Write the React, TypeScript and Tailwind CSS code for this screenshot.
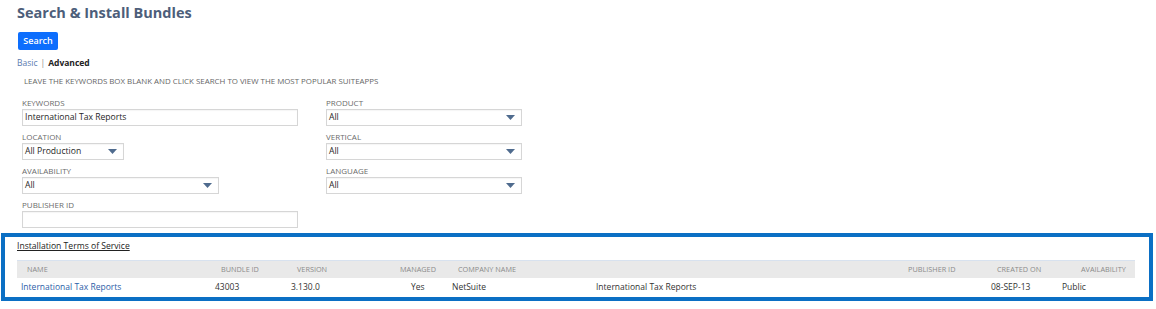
import React from 'react';

const Arrow: React.FC = () => (
    <svg width="9" height="5" viewBox="0 0 9 5" className="shrink-0">
        <path d="M0 0 H9 L4.5 5 Z" fill="#4f6b8e" />
    </svg>
);

const Field: React.FC<{ label: string; value?: string; width: string; select?: boolean }> = ({ label, value, width, select }) => (
    <div className="mb-[5px]">
        <div className="h-[12px] text-[8px] leading-[12px] text-[#6b6b6b] uppercase">{label}</div>
        <div className={`${width} h-[17px] border border-[#d6d6d6] bg-white flex items-center justify-between pl-[2px] pr-[6px] shadow-[inset_0_1px_1px_rgba(0,0,0,0.04)]`}>
            <span className="text-[8.6px] text-[#262626]">{value}</span>
            {select && <Arrow />}
        </div>
    </div>
);

const headers = [
    { label: 'Name', w: 'w-[194px]' },
    { label: 'Bundle ID', w: 'w-[76px]' },
    { label: 'Version', w: 'w-[103px]' },
    { label: 'Managed', w: 'w-[58px]' },
    { label: 'Company Name', w: 'w-[450px]' },
    { label: 'Publisher ID', w: 'w-[89px]' },
    { label: 'Created On', w: 'w-[84px]' },
    { label: 'Availability', w: 'flex-1' },
];

export default function App() {
    return (
        <div className="w-[1156px] h-[309px] bg-white font-['Open_Sans',sans-serif] text-[#333] overflow-hidden">
            <div className="pl-[17px]">
                <h1 className="h-[26px] text-[14.5px] leading-[26px] font-bold text-[#4d5e7a]">Search &amp; Install Bundles</h1>
                <button className="mt-[5px] ml-[1px] w-[40px] h-[18px] rounded-[2px] bg-[#0d6efd] text-white text-[9px] font-semibold">Search</button>
                <div className="mt-[7px] h-[12px] text-[8.5px] leading-[12px]">
                    <span className="text-[#5a7bb0]">Basic</span>
                    <span className="text-[#888] mx-[3px]">|</span>
                    <span className="font-bold text-[#222]">Advanced</span>
                </div>
                <div className="mt-[6px] pl-[7px] h-[12px] text-[7.9px] leading-[12px] text-[#666]">
                    LEAVE THE KEYWORDS BOX BLANK AND CLICK SEARCH TO VIEW THE MOST POPULAR SUITEAPPS
                </div>
            </div>

            <div className="mt-[10px] pl-[22px] flex">
                <div className="w-[304px]">
                    <Field label="Keywords" value="International Tax Reports" width="w-[276px]" />
                    <Field label="Location" value="All Production" width="w-[102px]" select />
                    <Field label="Availability" value="All" width="w-[197px]" select />
                    <Field label="Publisher ID" width="w-[276px]" />
                </div>
                <div>
                    <Field label="Product" value="All" width="w-[196px]" select />
                    <Field label="Vertical" value="All" width="w-[196px]" select />
                    <Field label="Language" value="All" width="w-[196px]" select />
                </div>
            </div>

            <div className="ml-[1px] w-[1152px] h-[68px] border-4 border-[#0b6fc4] pl-[12px] pr-[14px]">
                <div className="pt-[3px] h-[15px] text-[8.6px] leading-[12px] text-[#222]">
                    <span className="underline">Installation Terms of Service</span>
                </div>
                <div className="mt-[8px] h-[18px] bg-[#e9e9e9] border-t border-[#d8e2ef] flex items-center pl-[10px] text-[7.3px] text-[#8a8a8a] uppercase">
                    {headers.map((h) => (
                        <div key={h.label} className={h.w}>{h.label}</div>
                    ))}
                </div>
                <div className="h-[19px] flex items-center pl-[4px] text-[8.5px] text-[#333]">
                    <div className="w-[194px] text-[#2c5ea8]">International Tax Reports</div>
                    <div className="w-[76px]">43003</div>
                    <div className="w-[120px]">3.130.0</div>
                    <div className="w-[41px]">Yes</div>
                    <div className="w-[144px]">NetSuite</div>
                    <div className="w-[395px]">International Tax Reports</div>
                    <div className="w-[71px]">08-SEP-13</div>
                    <div className="flex-1">Public</div>
                </div>
            </div>
        </div>
    );
}
